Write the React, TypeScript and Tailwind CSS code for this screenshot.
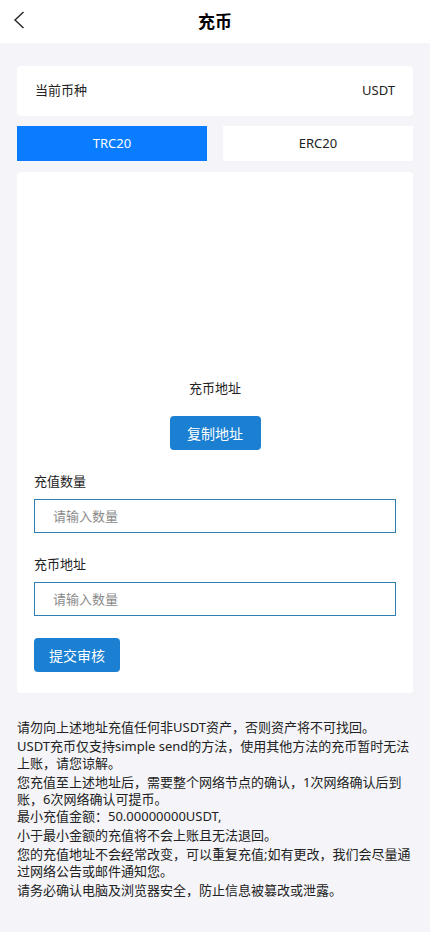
const FONT = "font-['Noto_Sans','Noto_Sans_CJK_SC',sans-serif]";

const NOTES: string[][] = [
  ["请勿向上述地址充值任何非USDT资产，否则资产将不可找回。"],
  ["USDT充币仅支持simple send的方法，使用其他方法的充币暂时无法", "上账，请您谅解。"],
  ["您充值至上述地址后，需要整个网络节点的确认，1次网络确认后到", "账，6次网络确认可提币。", "最小充值金额：50.00000000USDT,"],
  ["小于最小金额的充值将不会上账且无法退回。"],
  ["您的充值地址不会经常改变，可以重复充值;如有更改，我们会尽量通", "过网络公告或邮件通知您。"],
  ["请务必确认电脑及浏览器安全，防止信息被篡改或泄露。"],
];

function Field({ label }: { label: string }) {
  return (
    <div>
      <div className="h-5 text-[13px] leading-5 text-[#222]">{label}</div>
      <input
        className="mt-[8px] block h-[34px] w-full border border-[#2f7fb5] bg-white px-[18px] text-[13px] text-[#333] outline-none placeholder:text-[#8a8a8a]"
        placeholder="请输入数量"
      />
    </div>
  );
}

export default function App() {
  return (
    <div className={`min-h-[932px] w-[430px] bg-[#f5f5f9] ${FONT}`}>
      <header className="relative flex h-[43px] items-center justify-center bg-white">
        <button type="button" className="absolute left-[13px] top-[11px]" aria-label="返回">
          <svg width="12" height="18" viewBox="0 0 12 18" fill="none">
            <polyline points="10.5,1 2,9 10.5,17" stroke="#222" strokeWidth="1.4" />
          </svg>
        </button>
        <h1 className="text-[17px] font-bold text-black">充币</h1>
      </header>

      <main className="px-[17px] pt-[23px]">
        <div className="flex h-[50px] items-center justify-between rounded-sm bg-white px-[18px] text-[13px] text-[#222]">
          <span>当前币种</span>
          <span>USDT</span>
        </div>

        <div className="mt-[10px] grid h-[35px] grid-cols-2 gap-4 text-[13px]">
          <button type="button" className="bg-[#0a7cff] text-white">TRC20</button>
          <button type="button" className="bg-white text-[#222]">ERC20</button>
        </div>

        <section className="mt-[11px] rounded-sm bg-white px-[17px] pb-[21px]">
          <div className="h-[206px]" />
          <div className="h-5 text-center text-[13px] leading-5 text-[#222]">充币地址</div>
          <div className="mt-[18px] flex justify-center">
            <button type="button" className="h-[34px] w-[91px] rounded bg-[#1c80d2] text-[14px] text-white">
              复制地址
            </button>
          </div>
          <div className="mt-[21px]">
            <Field label="充值数量" />
          </div>
          <div className="mt-[21px]">
            <Field label="充币地址" />
          </div>
          <button type="button" className="mt-[22px] h-[34px] w-[86px] rounded bg-[#1c80d2] text-[14px] text-white">
            提交审核
          </button>
        </section>

        <div className="mt-[26px] flex flex-col gap-[2px] pb-6 text-[13px] leading-[17px] text-[#222]">
          {NOTES.map((lines, i) => (
            <p key={i} className="whitespace-nowrap">
              {lines.map((l, j) => (
                <span key={j} className="block">{l}</span>
              ))}
            </p>
          ))}
        </div>
      </main>
    </div>
  );
}
